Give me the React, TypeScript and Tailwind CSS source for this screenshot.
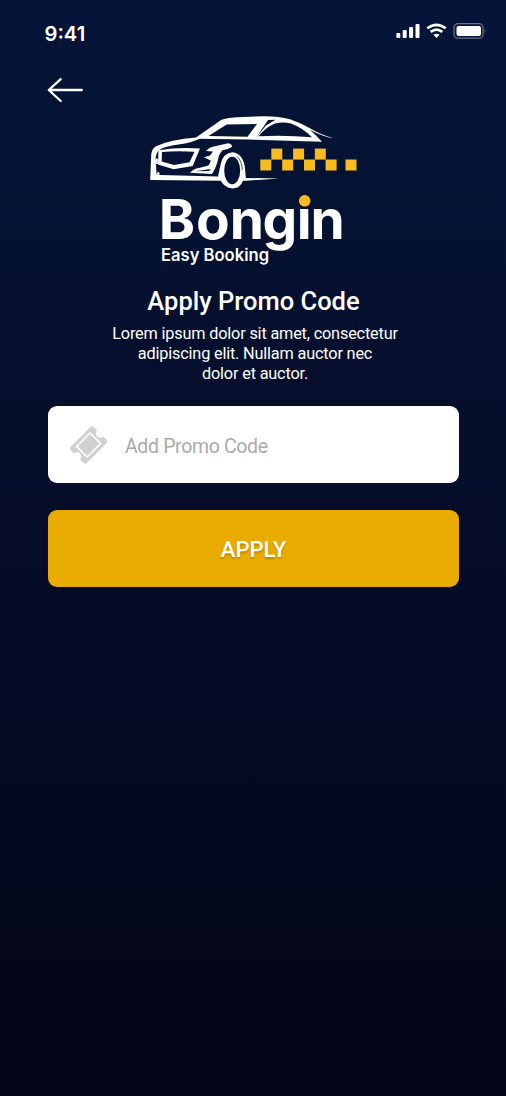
import React from "react";

function StatusBar() {
  return (
    <header className="flex h-[62px] items-start justify-between pl-[44.5px] pr-[19px] pt-[20.5px]">
      <span className="font-[Inter] text-[20.2px] font-semibold leading-[25px]">9:41</span>
      <svg className="mt-[1.5px]" width="92" height="20" viewBox="395 22 92 20" aria-hidden="true">
        <g fill="#fff">
          <rect x="396.3" y="33" width="4" height="5" rx="1" />
          <rect x="402.7" y="30" width="4" height="8" rx="1" />
          <rect x="409.1" y="27" width="4" height="11" rx="1" />
          <rect x="415.5" y="24" width="4" height="14" rx="1" />
          <rect x="456.5" y="26" width="24.5" height="10" rx="2" />
          <path d="M433.400 34.800Q436.500 32.600 439.600 34.800L436.500 38Z" />
        </g>
        <g fill="none" stroke="#fff" strokeWidth="2.700">
          <path d="M427.300 28.300Q436.500 21.300 445.700 28.300" />
          <path d="M430.700 31.900Q436.500 27.500 442.300 31.900" />
        </g>
        <rect x="454" y="23.700" width="29" height="14.500" rx="4" fill="none" stroke="#6a7388" strokeWidth="1.300" />
        <path d="M484.700 28.500q1.700 2.400 0 4.800Z" fill="#6a7388" />
      </svg>
    </header>
  );
}

const squares = [
  [260.3, 159.5], [282.2, 159.5], [304, 159.5], [325.6, 159.5], [345.5, 159.5],
  [271.3, 148.6], [293.1, 148.6], [314.8, 148.6],
];

function Logo() {
  return (
    <svg className="block" width="220" height="160" viewBox="144 110 220 160" role="img" aria-label="Bongin Easy Booking">
      <g fill="#fff" fillRule="evenodd">
        <path d="M196 137.500L221.500 119.800Q228 117.500 237 117.200L263 116.200Q278 116 290 119.200Q300 122.500 310 128.300Q320 134.500 333.500 138.300Q326 137.800 310 130L314.500 134L322 141.700L249 139.500L198 138.800ZM226.700 124.500L208.500 136L247.500 136.800L257 124ZM268 120L275.500 119.800L266 125.500L256 138L258 135ZM258.500 136.300Q284 134.800 312 137.300Q303 128 291 123.500Q283 121.500 275 123.500Q266.500 126.500 258.500 136.300Z" />
        <path d="M150.200 180L151.200 155Q151.500 149 156 146.300Q164 142.500 173 140.700Q184 138.500 196 137.500L201 138.300Q190 143.200 180 144.300Q166 146 160 149.500Q155.500 153 155.700 159L156.500 173.700L160 174.900L218 176.500L220.500 165Q223 152.800 232.500 152.300Q243 153.500 245 168L245.800 178L279 178.500L246 180.800L243 180.800Q240 188.500 232.500 188.500Q224.500 187.500 220.700 180.700ZM232.200 156.700A8 13.800 0 1 0 232.200 184.300A8 13.800 0 1 0 232.200 156.700Z" />
        <path d="M158.500 150.200Q179 147 200 148.500L192.700 166L173.500 169.300L158 164.500ZM162 152L161.700 161.500L174 165L189.500 162.300L194.500 151.800Q178 150.700 162 152Z" />
        <path d="M206 151Q209 147 216 146L228 143.200Q232.500 143.800 231.800 147Q228.500 149.500 222.500 150.300Q218.500 154.500 218 160Q215.500 169 212 174L190 172.800Q193.500 168.800 199 168L208.500 165.600L211 160.700L204 157.300L210 155.400L213 151.500ZM195 171.300L209 170.900L211 168.900Z" />
      </g>
      <path d="M156.700 158.500V164M157.500 172.500L159 174.500" stroke="#fff" strokeWidth="2.200" />
      <path d="M237 156.500Q242 161 242.300 170" fill="none" stroke="#09163a" strokeWidth=".7" />
      {squares.map(([x, y]) => (
        <rect key={`${x}-${y}`} x={x} y={y} width="11" height="11" fill="#f8bb20" />
      ))}
      <text x="158.800 196 229.700 262.500 296.800 310.500" y="239" fill="#fff" fontFamily="Inter, sans-serif" fontSize="55" fontWeight="700">
        Bongin
      </text>
      <circle cx="304.700" cy="200.800" r="5.800" fill="#f8bb20" />
      <text x="161" y="260.500" fill="#fff" fontFamily="Inter, sans-serif" fontSize="16.800" fontWeight="600" textLength="108" lengthAdjust="spacingAndGlyphs">
        Easy Booking
      </text>
    </svg>
  );
}

function TicketIcon() {
  return (
    <svg className="ml-[20px] shrink-0" width="42" height="42" viewBox="68 424 42 42" aria-hidden="true">
      <g transform="translate(88.600 445) rotate(-45) scale(.91) translate(-89 -445)" fill="#d0d0d0">
        <path
          fillRule="evenodd"
          d="M74 432.500H104Q107 432.500 107 435.500V440.300A4.700 4.700 0 0 0 107 449.700V454.500Q107 457.500 104 457.500H74Q71 457.500 71 454.500V449.700A4.700 4.700 0 0 0 71 440.300V435.500Q71 432.500 74 432.500ZM77.500 435.800V454.200H100.500V435.800Z"
        />
        <rect x="79.500" y="437.800" width="19" height="14.400" />
      </g>
    </svg>
  );
}

export default function App() {
  return (
    <main className="flex h-[1096px] w-[506px] flex-col bg-linear-to-b from-[#051539] to-[#040618] font-[Roboto] text-white">
      <StatusBar />
      <nav className="flex h-[48px] items-start pl-[46px] pt-[14px]">
        <button aria-label="Back">
          <svg className="block" width="38" height="28" viewBox="46 76 38 28" fill="none" stroke="#fff" strokeWidth="2.300" strokeLinecap="round" strokeLinejoin="round">
            <path d="M81.800 90H48.800M60.700 79.200L48.800 90L60.700 101" />
          </svg>
        </button>
      </nav>
      <div className="pl-[144px]">
        <Logo />
      </div>
      <section className="flex flex-col items-center pt-[15px] text-center">
        <h1 className="pl-px text-[25.500px] font-medium leading-[32px]">Apply Promo Code</h1>
        <p className="mt-[7px] w-[320px] pl-1 text-[16.300px] leading-[20px] tracking-[-0.180px]">
          Lorem ipsum dolor sit amet, consectetur
          <br />
          adipiscing elit. Nullam auctor nec
          <br />
          dolor et auctor.
        </p>
      </section>
      <form className="mx-[48px] mt-[22.400px] flex w-[411px] flex-col gap-[27px]">
        <label className="flex h-[77px] items-center rounded-[9px] bg-white">
          <TicketIcon />
          <input
            className="ml-[15px] w-[280px] bg-transparent pt-[4px] text-[19.500px] tracking-[-0.350px] text-black outline-none placeholder:text-[#aaaaaa]"
            placeholder="Add Promo Code"
          />
        </label>
        <button type="button" className="h-[77px] rounded-[9px] bg-[#e9ab00] pt-[2px] text-[22px] font-medium text-shadow-[0_2px_2px_rgb(0_0_0/0.2)]">
          APPLY
        </button>
      </form>
    </main>
  );
}
